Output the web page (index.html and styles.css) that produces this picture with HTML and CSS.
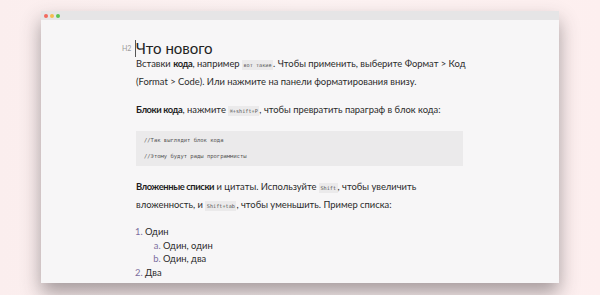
FILE: index.html
```html
<!DOCTYPE html>
<html lang="ru">
  <head>
    <meta charset="UTF-8" />
    <title>Editor</title>
    <link rel="stylesheet" href="styles.css">
  </head>
  <body>
    <div class="window">
      <div class="titlebar">
        <span class="dot red"></span>
        <span class="dot yellow"></span>
        <span class="dot green"></span>
      </div>
      <div class="doc">
        <h2 class="heading"><span class="tag">H2</span><span class="caret"></span>Что нового</h2>
        <p>Вставки <b>кода</b>, например <code>вот такие</code>. Чтобы применить, выберите Формат &gt; Код<br>(Format &gt; Code). Или нажмите на панели форматирования внизу.</p>
        <p><b>Блоки кода</b>, нажмите <code>⌘+shift+P</code>, чтобы превратить параграф в блок кода:</p>
        <pre class="codeblock">//Так выглядит блок кода
//Этому будут рады программисты</pre>
        <p><b>Вложенные списки</b> и цитаты. Используйте <code>Shift</code>, чтобы увеличить<br>вложенность, и <code>Shift+tab</code>, чтобы уменьшить. Пример списка:</p>
        <ol class="list">
          <li>Один
            <ol class="sub">
              <li>Один, один</li>
              <li>Один, два</li>
            </ol>
          </li>
          <li>Два</li>
        </ol>
      </div>
    </div>
  </body>
</html>
```

FILE: styles.css
```css
* {
  margin: 0;
  padding: 0;
  box-sizing: border-box;
}

body {
  width: 600px;
  height: 295px;
  overflow: hidden;
  background: linear-gradient(90deg, #fbeeee 0%, #fdf3f3 50%, #fdefef 100%);
  font-family: Lato, "Noto Sans", sans-serif;
  color: #2b2b2b;
  padding: 11px 41px 0 41px;
}

.window {
  height: 272px;
  background: #f7f6f7;
  overflow: hidden;
  box-shadow: 0 10px 18px rgba(60, 50, 55, 0.45);
}

.titlebar {
  height: 9px;
  background: #e6e5e6;
  display: flex;
  align-items: center;
  gap: 2px;
  padding-left: 3px;
}

.dot {
  width: 4px;
  height: 4px;
  border-radius: 50%;
}

.red { background: #f26a5f; }
.yellow { background: #f5bd4f; }
.green { background: #5cc454; }

.doc {
  padding: 20px 0 0 95px;
  width: 470px;
}

.heading {
  position: relative;
  font-size: 15px;
  font-weight: 400;
  line-height: 16px;
  color: #222;
  margin-bottom: -1px;
}

.tag {
  position: absolute;
  left: -14px;
  top: 4px;
  font-size: 7px;
  line-height: 8px;
  color: #9a9a9a;
}

.caret {
  position: absolute;
  left: -1px;
  top: 0;
  width: 1px;
  height: 17px;
  background: #555;
}

p {
  font-size: 9.4px;
  line-height: 18px;
  margin-bottom: 10px;
  white-space: nowrap;
}

b {
  font-weight: 700;
  letter-spacing: -0.4px;
  color: #1e1e1e;
}

code {
  font-family: "DejaVu Sans Mono", monospace;
  font-size: 5.2px;
  line-height: 1;
  background: #ebeaeb;
  padding: 2px 1.5px;
  color: #555;
}

.codeblock {
  font-family: "DejaVu Sans Mono", monospace;
  font-size: 5.5px;
  line-height: 16px;
  color: #555;
  background: #ebeaeb;
  width: 327px;
  padding: 1px 8px 2px 8px;
  margin: 12px 0 12px 0;
}

.list {
  font-size: 9.4px;
  line-height: 13.5px;
  padding-left: 9px;
  margin-top: 11px;
}

.list li::marker {
  color: #7c6e9e;
}

.sub {
  list-style: lower-alpha;
  padding-left: 18px;
}
```
